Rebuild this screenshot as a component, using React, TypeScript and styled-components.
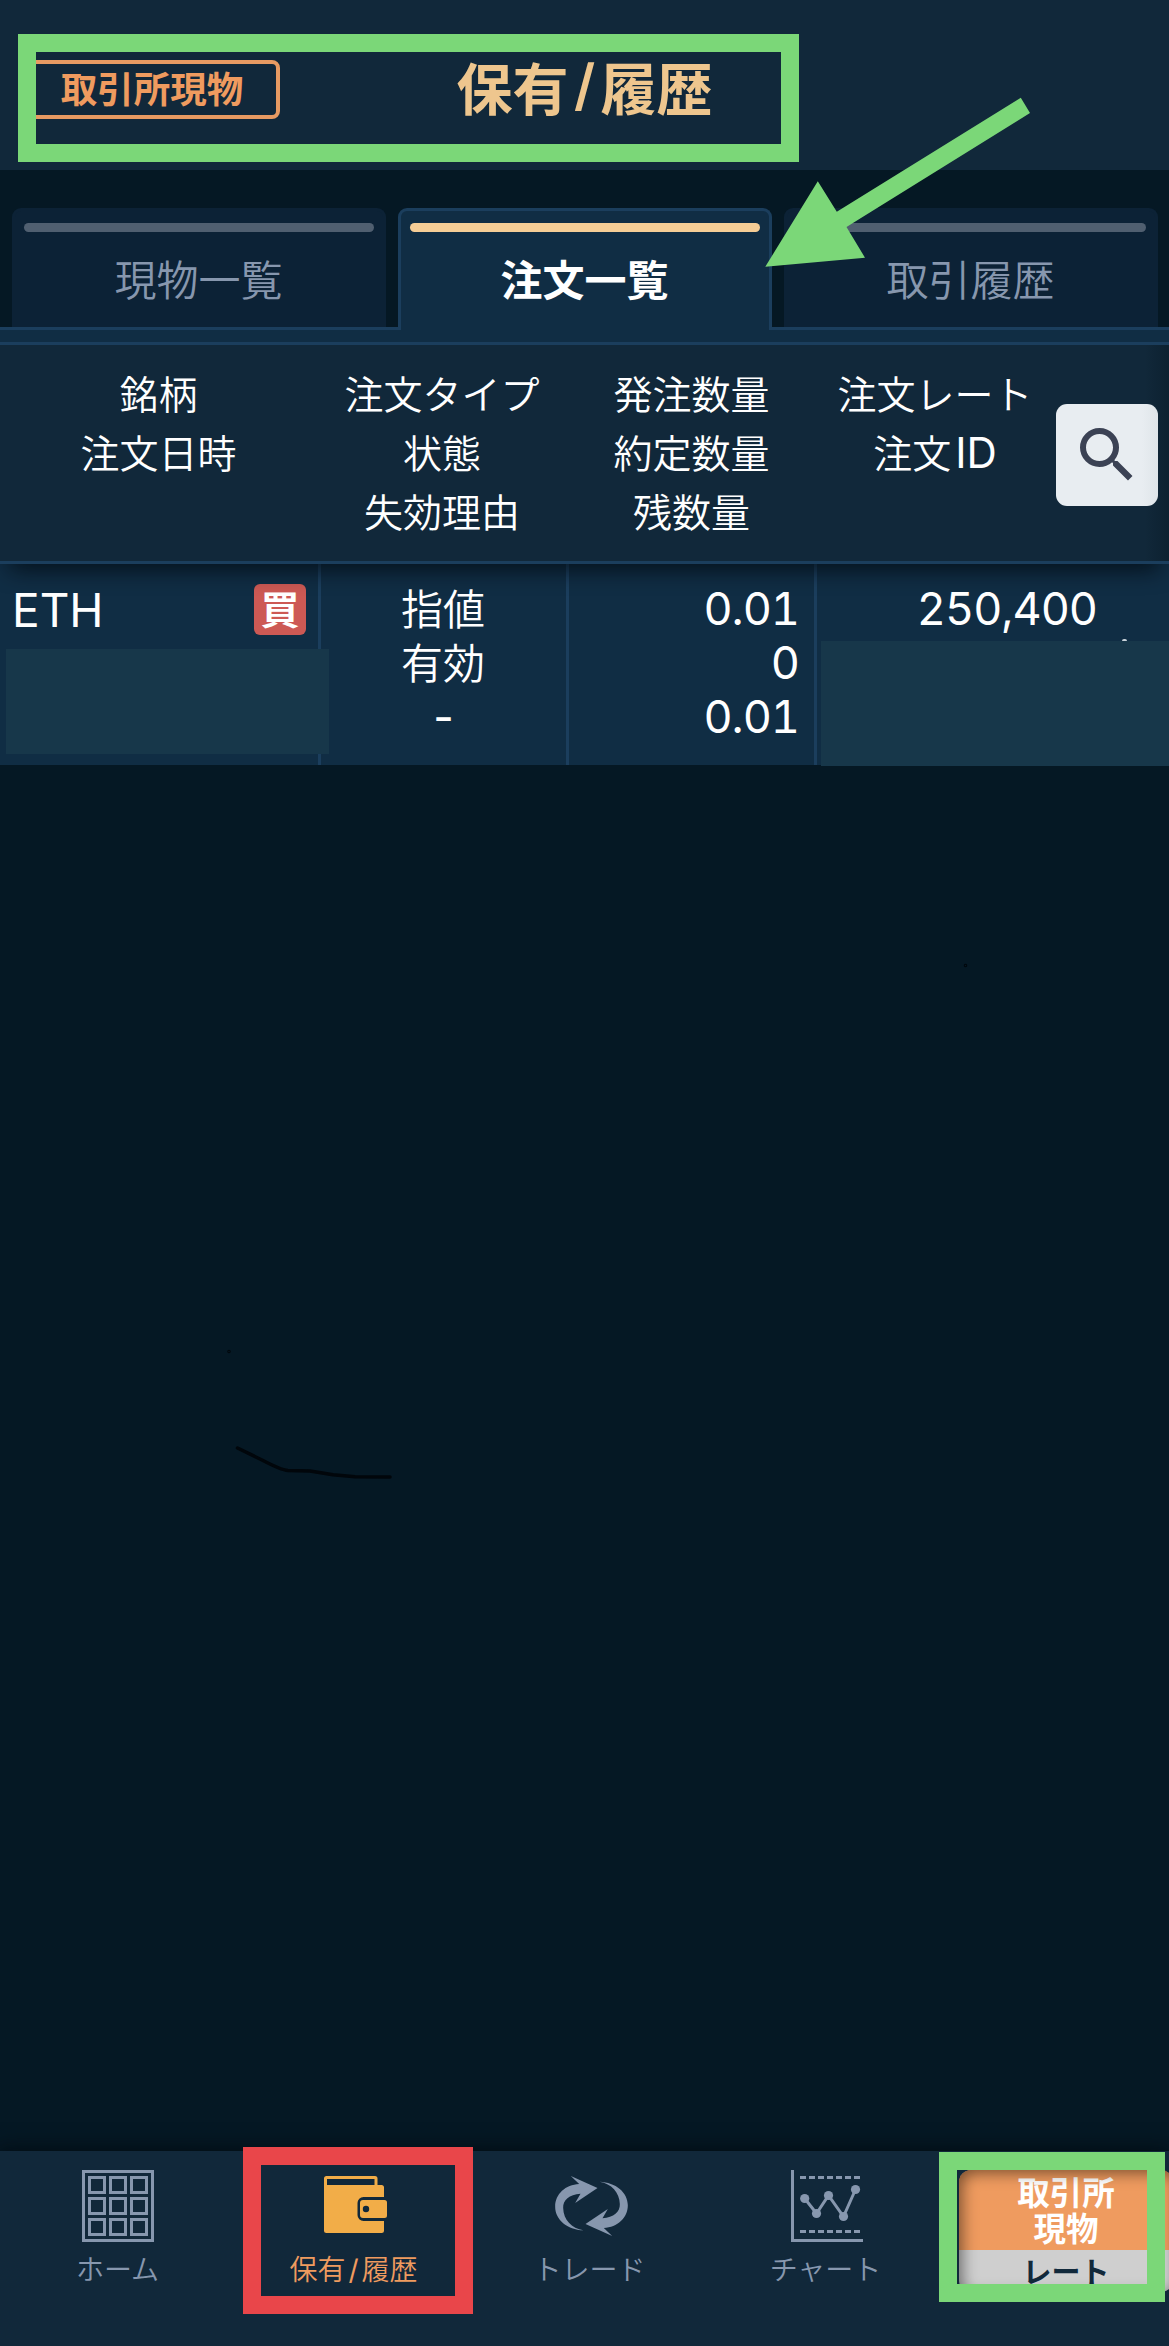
import React from 'react';
import styled, { createGlobalStyle } from 'styled-components';
import { MdSearch } from 'react-icons/md';

const c = {
  page: '#051824',
  panel: '#11283a',
  row: '#102d44',
  line: '#1b3e5d',
  tab: '#0c2236',
  muted: '#8797ae',
  green: '#7bd778',
  red: '#e9464a',
  orange: '#ef9b5f',
  mask: '#17374a',
};

const Global = createGlobalStyle`
  *, *::before, *::after { box-sizing: border-box; }
  body { margin: 0; background: ${c.page}; }
`;

const Screen = styled.div`
  position: relative;
  width: 1169px;
  height: 2346px;
  overflow: hidden;
  display: flex;
  flex-direction: column;
  background: ${c.page};
  color: #fff;
  font-family: 'Noto Sans CJK JP', 'Noto Sans', sans-serif;
  font-weight: 350;
  white-space: nowrap;
`;

const Header = styled.header`
  height: 170px;
  flex: none;
  padding: 50px 24px 0;
  display: grid;
  grid-template-columns: 256px 1fr 256px;
  align-items: start;
  background: ${c.panel};
`;

const ProductBadge = styled.div`
  margin-top: 10px;
  height: 59px;
  border: 4px solid #e79a62;
  border-radius: 8px;
  display: flex;
  align-items: center;
  justify-content: center;
  color: #ef9b5f;
  font-size: 36.5px;
  font-weight: 700;
  line-height: 50px;
  padding-bottom: 3px;
`;

const Title = styled.h1`
  margin: 0;
  display: flex;
  justify-content: center;
  color: #eec68e;
  font-size: 56px;
  font-weight: 700;
  line-height: 71px;
`;

const Slash = styled.span<{ $gap: number; $weight: number }>`
  font-family: Inter, sans-serif;
  font-weight: ${(p) => p.$weight};
  margin: 0 ${(p) => p.$gap}px;
`;

const Tabs = styled.nav`
  height: 160px;
  flex: none;
  padding: 38px 11px 0 12px;
  display: grid;
  grid-template-columns: repeat(3, 374px);
  column-gap: 12px;
  border-bottom: 3px solid ${c.line};
`;

const Tab = styled.div<{ $active?: boolean }>`
  height: ${(p) => (p.$active ? 122 : 119)}px;
  border: 3px solid ${(p) => (p.$active ? c.line : c.tab)};
  border-bottom: 0;
  border-radius: 9px 9px 0 0;
  background: ${(p) => (p.$active ? c.row : c.tab)};
  padding: 12px 9px 0;
  display: flex;
  flex-direction: column;
  align-items: center;
  color: ${(p) => (p.$active ? '#fff' : c.muted)};
  font-size: 42px;
  line-height: 60px;
  font-weight: ${(p) => (p.$active ? 700 : 350)};
`;

const TabLabel = styled.span`
  margin-right: 1px;
`;

const TabBar = styled.span<{ $active?: boolean }>`
  align-self: stretch;
  height: 9px;
  flex: none;
  margin-bottom: 16px;
  border-radius: 5px;
  background: ${(p) => (p.$active ? '#f5cd96' : '#505f70')};
`;

const Strip = styled.div`
  height: 15px;
  flex: none;
  background: ${c.row};
  border-bottom: 3px solid ${c.line};
`;

const TableHead = styled.div`
  height: 219px;
  flex: none;
  display: grid;
  grid-template-columns: 317px 250px 249px 238px 102px;
  background: linear-gradient(to left, rgba(4, 20, 30, 0.35), transparent 24px), ${c.panel};
  border-bottom: 3px solid ${c.line};
`;

const HeadCell = styled.div`
  padding-top: 18px;
  display: flex;
  flex-direction: column;
  align-items: center;
  font-size: 39px;
  line-height: 59px;
`;

const Latin = styled.span<{ $size: number; $before?: number }>`
  font-family: Inter, sans-serif;
  font-size: ${(p) => p.$size}px;
  font-weight: 400;
  line-height: 1;
  margin-left: ${(p) => p.$before || 0}px;
`;

const SearchButton = styled.button`
  margin: 59px 0 0 2px;
  width: 102px;
  height: 102px;
  padding: 0;
  border: 0;
  border-radius: 11px;
  display: flex;
  align-items: center;
  justify-content: center;
  background: linear-gradient(to left, #dfe5e9, #e8edf1 16px);
  color: #3b4254;
`;

const OrderRow = styled.div`
  position: relative;
  height: 201px;
  flex: none;
  display: grid;
  grid-template-columns: 321px 248px 248px 1fr;
  background: ${c.row};
`;

const RowShade = styled.div`
  position: absolute;
  inset: 0 0 auto 0;
  height: 40px;
  overflow: hidden;
  &::before {
    content: '';
    position: absolute;
    left: 12px;
    right: 12px;
    top: -20px;
    height: 20px;
    box-shadow: 0 3px 22px 2px rgba(0, 8, 14, 0.8);
  }
`;

const Cell = styled.div<{ $align: string; $last?: boolean }>`
  padding: 16px 15px 0 14px;
  border-right: ${(p) => (p.$last ? 0 : 3)}px solid ${c.line};
  display: flex;
  flex-direction: column;
  align-items: ${(p) => p.$align};
  font-size: 42px;
  line-height: 54px;
`;

const Value = styled.span<{ $shift?: number }>`
  height: 54px;
  display: block;
  margin-right: ${(p) => p.$shift || 0}px;
`;

const Digits = styled(Value)`
  font-family: Inter, sans-serif;
  font-size: 45px;
  font-weight: 400;
  font-variant-numeric: tabular-nums;
  letter-spacing: -1px;
  line-height: 57px;
`;

const SymbolLine = styled.div`
  align-self: stretch;
  display: flex;
  justify-content: space-between;
  align-items: center;
  margin: 4px 0 0 -2px;
  height: 51px;
`;

const BuyTag = styled.span`
  width: 52px;
  height: 51px;
  margin-right: -3px;
  border-radius: 6px;
  background: #cd5954;
  text-align: center;
  font-size: 39px;
  font-weight: 700;
  line-height: 47px;
`;

const Mask = styled.div<{ $x: number; $y: number; $w: number; $h: number }>`
  position: absolute;
  left: ${(p) => p.$x}px;
  top: ${(p) => p.$y}px;
  width: ${(p) => p.$w}px;
  height: ${(p) => p.$h}px;
  background: ${c.mask};
`;

const Speck = styled.i`
  position: absolute;
  left: 1122px;
  top: 75px;
  width: 5px;
  height: 3px;
  border-radius: 2px 2px 0 0;
  background: #c9d3da;
`;

const Body = styled.main`
  flex: 1;
`;

const Scribble = styled.svg`
  position: absolute;
  left: 0;
  top: 900px;
  pointer-events: none;
`;

const BottomBar = styled.nav`
  height: 195px;
  flex: none;
  padding-top: 19px;
  display: grid;
  grid-template-columns: repeat(4, 236px) 15px 214px;
  background: ${c.panel};
  box-shadow: 0 0 18px 2px rgba(0, 6, 10, 0.65);
`;

const NavItem = styled.div<{ $active?: boolean }>`
  display: flex;
  flex-direction: column;
  align-items: center;
  color: ${(p) => (p.$active ? c.orange : c.muted)};
  font-size: 28px;
  line-height: 40px;
  svg { display: block; margin-bottom: 6px; }
`;

const NavLabel = styled.span`
  margin-right: 1px;
`;

const RateButton = styled.div`
  grid-column: 6;
  height: 122px;
  border-radius: 12px;
  overflow: hidden;
  display: flex;
  flex-direction: column;
  text-align: center;
  position: relative;
  &::after {
    content: '';
    position: absolute;
    inset: 0;
    border-radius: 12px;
    box-shadow: inset 3px 3px 15px rgba(0, 0, 0, 0.5);
  }
`;

const RateTop = styled.div`
  height: 80px;
  padding-top: 3px;
  background: ${c.orange};
  font-size: 32.5px;
  line-height: 36px;
  font-weight: 700;
`;

const RateBottom = styled.div`
  flex: 1;
  background: #cfcfcf;
  color: #12293b;
  font-size: 29px;
  font-weight: 700;
  line-height: 41px;
`;

const Frame = styled.div<{ $x: number; $y: number; $w: number; $h: number; $color: string }>`
  position: absolute;
  left: ${(p) => p.$x}px;
  top: ${(p) => p.$y}px;
  width: ${(p) => p.$w}px;
  height: ${(p) => p.$h}px;
  border: 18px solid ${(p) => p.$color};
`;

const Arrow = styled.svg`
  position: absolute;
  left: 760px;
  top: 90px;
`;

const GridIcon = () => (
  <svg width="72" height="72" fill="none" stroke="currentColor" strokeWidth="3">
    <rect x="1.5" y="1.5" width="69" height="69" />
    {[0, 1, 2].map((r) =>
      [0, 1, 2].map((k) => (
        <rect key={`${r}${k}`} x={7.5 + k * 21} y={7.5 + r * 21} width="15" height="15" />
      )),
    )}
  </svg>
);

const WalletIcon = () => (
  <svg width="72" height="72" viewBox="2.5 0 72 72">
    <path
      d="M11 6H59.500a2.500 2.500 0 0 1 2.500 2.500V15H66a2.500 2.500 0 0 1 2.500 2.500V27H48a6 6 0 0 0-6 6V45a6 6 0 0 0 6 6H68.500V60.500a2.500 2.500 0 0 1-2.500 2.500H11a2.500 2.500 0 0 1-2.500-2.500V8.500A2.500 2.500 0 0 1 11 6Z"
      fill="#f2ad48"
    />
    <rect x="11.500" y="9" width="47.500" height="6" fill={c.panel} />
    <path
      fillRule="evenodd"
      d="M47.500 30H69a2.500 2.500 0 0 1 2.500 2.500V45.500A2.500 2.500 0 0 1 69 48H47.500A3 3 0 0 1 44.500 45V33a3 3 0 0 1 3-3ZM50.500 35.800a3.200 3.200 0 1 0 0 6.400 3.200 3.200 0 0 0 0-6.400Z"
      fill="#f2ad48"
    />
  </svg>
);

const loop =
  'M85 163C36 161 0 131 0 92C0 54 31 26 72 24L47 0L127 36L60 81L76 53C42 56 23 72 24 96C25 131 49 157 85 163Z';

const TradeIcon = () => (
  <svg width="73" height="72" viewBox="-3 -18 218 216" fill="currentColor" overflow="visible">
    <path d={loop} />
    <path d={loop} transform="rotate(180 109 90)" />
  </svg>
);

const ChartIcon = () => (
  <svg width="72" height="72" viewBox="-1 0 72 72" fill="none" stroke="currentColor" strokeWidth="3" overflow="visible">
    <path d="M1.500 0V70.500H72" />
    <path d="M9 7.500H69M9 61.500H69" strokeDasharray="6 3" />
    <path d="M13.700 28.500L25.500 43.500L37.500 25.500L52.500 46.500L64.500 19.500" />
    <g fill="currentColor" stroke="none">
      <circle cx="13.700" cy="28.500" r="4.600" />
      <circle cx="25.500" cy="43.500" r="4.600" />
      <circle cx="37.500" cy="25.500" r="4.600" />
      <circle cx="52.500" cy="46.500" r="4.600" />
      <circle cx="64.500" cy="19.500" r="4.600" />
    </g>
  </svg>
);

export default function App() {
  return (
    <Screen>
      <Global />
      <Header>
        <ProductBadge>取引所現物</ProductBadge>
        <Title>
          保有<Slash $gap={5.5} $weight={600}>/</Slash>履歴
        </Title>
      </Header>
      <Tabs>
        <Tab><TabBar /><TabLabel>現物一覧</TabLabel></Tab>
        <Tab $active><TabBar $active /><TabLabel>注文一覧</TabLabel></Tab>
        <Tab><TabBar /><TabLabel>取引履歴</TabLabel></Tab>
      </Tabs>
      <Strip />
      <TableHead>
        <HeadCell><span>銘柄</span><span>注文日時</span></HeadCell>
        <HeadCell><span>注文タイプ</span><span>状態</span><span>失効理由</span></HeadCell>
        <HeadCell><span>発注数量</span><span>約定数量</span><span>残数量</span></HeadCell>
        <HeadCell>
          <span>注文レート</span>
          <span>注文<Latin $size={42} $before={4}>ID</Latin></span>
        </HeadCell>
        <SearchButton aria-label="検索"><MdSearch size={72} /></SearchButton>
      </TableHead>
      <OrderRow>
        <Cell $align="flex-start">
          <SymbolLine><Latin $size={46}>ETH</Latin><BuyTag>買</BuyTag></SymbolLine>
        </Cell>
        <Cell $align="center"><Value>指値</Value><Value>有効</Value><Digits>-</Digits></Cell>
        <Cell $align="flex-end"><Digits>0.01</Digits><Digits>0</Digits><Digits>0.01</Digits></Cell>
        <Cell $align="flex-end" $last><Digits $shift={57}>250,400</Digits></Cell>
        <RowShade />
        <Speck />
        <Mask $x={6} $y={85} $w={323} $h={105} />
        <Mask $x={821} $y={77} $w={348} $h={125} />
      </OrderRow>
      <Body />
      <Scribble width="1169" height="600" fill="none" stroke="#01060b" strokeWidth="3.500" strokeLinecap="round" strokeLinejoin="round">
        <path d="M237.500 548L262 560Q281 570 288 570.500L310 571L333 574.700L355 576.700L390 577" />
        <circle cx="229" cy="451.500" r="0.500" strokeWidth="2.500" />
        <circle cx="965.500" cy="65.500" r="0.500" strokeWidth="2.500" />
      </Scribble>
      <BottomBar>
        <NavItem><GridIcon /><NavLabel>ホーム</NavLabel></NavItem>
        <NavItem $active>
          <WalletIcon />
          <NavLabel>保有<Slash $gap={3} $weight={400}>/</Slash>履歴</NavLabel>
        </NavItem>
        <NavItem><TradeIcon /><NavLabel>トレード</NavLabel></NavItem>
        <NavItem><ChartIcon /><NavLabel>チャート</NavLabel></NavItem>
        <RateButton>
          <RateTop>取引所<br />現物</RateTop>
          <RateBottom>レート</RateBottom>
        </RateButton>
      </BottomBar>
      <Frame $x={18} $y={34} $w={781} $h={128} $color={c.green} />
      <Frame $x={243} $y={2147} $w={230} $h={167} $color={c.red} />
      <Frame $x={939} $y={2152} $w={226} $h={150} $color={c.green} />
      <Arrow width="280" height="190">
        <path
          d="M5.300 176.700L57.800 91.300L76.800 121.700L260.800 7.700L270 23L86.500 137L105 167.700Z"
          fill={c.green}
        />
      </Arrow>
    </Screen>
  );
}
